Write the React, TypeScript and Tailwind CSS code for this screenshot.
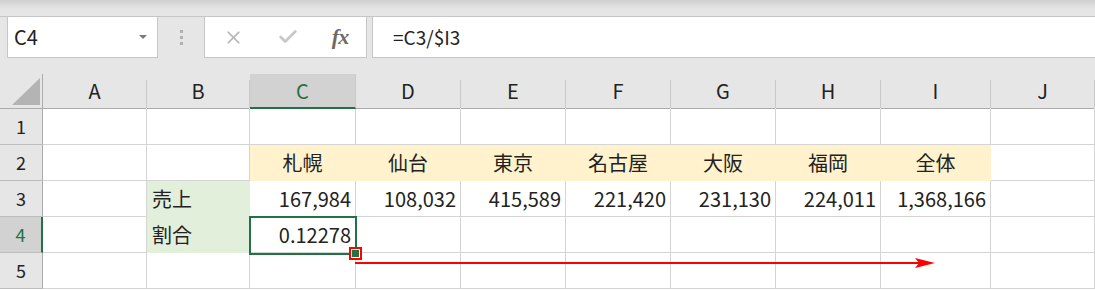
import { X, Check } from 'lucide-react'

const cols = [
  { key: 'A', w: 'w-[104px]' },
  { key: 'B', w: 'w-[103px]' },
  { key: 'C', w: 'w-[106px]' },
  { key: 'D', w: 'w-[105px]' },
  { key: 'E', w: 'w-[105px]' },
  { key: 'F', w: 'w-[105px]' },
  { key: 'G', w: 'w-[105px]' },
  { key: 'H', w: 'w-[105px]' },
  { key: 'I', w: 'w-[110px]' },
  { key: 'J', w: 'flex-1' },
]

type Cell = { text?: string; align?: 'left' | 'right' | 'center'; fill?: string }

// sheet data, indexed by row then column letter
const data: Record<number, Record<string, Cell>> = {
  2: {
    C: { text: '札幌', align: 'center', fill: 'bg-[#fff2cc]' },
    D: { text: '仙台', align: 'center', fill: 'bg-[#fff2cc]' },
    E: { text: '東京', align: 'center', fill: 'bg-[#fff2cc]' },
    F: { text: '名古屋', align: 'center', fill: 'bg-[#fff2cc]' },
    G: { text: '大阪', align: 'center', fill: 'bg-[#fff2cc]' },
    H: { text: '福岡', align: 'center', fill: 'bg-[#fff2cc]' },
    I: { text: '全体', align: 'center', fill: 'bg-[#fff2cc]' },
  },
  3: {
    B: { text: '売上', align: 'left', fill: 'bg-[#e2efda]' },
    C: { text: '167,984', align: 'right' },
    D: { text: '108,032', align: 'right' },
    E: { text: '415,589', align: 'right' },
    F: { text: '221,420', align: 'right' },
    G: { text: '231,130', align: 'right' },
    H: { text: '224,011', align: 'right' },
    I: { text: '1,368,166', align: 'right' },
  },
  4: {
    B: { text: '割合', align: 'left', fill: 'bg-[#e2efda]' },
    C: { text: '0.12278', align: 'right' },
  },
}

function FormulaBar() {
  return (
    <div className="bg-[#e6e6e6]">
      <div className="h-[17px] bg-gradient-to-b from-[#cfcfcf] via-[#e4e4e4] to-[#e6e6e6] border-b border-[#c6c6c6]" />
      <div className="flex h-[41px] items-stretch">
        <div className="ml-[7px] w-[151px] bg-white border border-[#c6c6c6] border-t-0 flex items-center justify-between pl-[6px] pr-[10px]">
          <span className="text-[20px] text-[#222]">C4</span>
          <span className="w-0 h-0 border-l-[4px] border-r-[4px] border-t-[4px] border-l-transparent border-r-transparent border-t-[#7a7a7a]" />
        </div>
        <div className="w-[46px] flex flex-col items-center justify-center gap-[3px]">
          <span className="w-[3px] h-[3px] bg-[#b0b0b0]" />
          <span className="w-[3px] h-[3px] bg-[#b0b0b0]" />
          <span className="w-[3px] h-[3px] bg-[#b0b0b0]" />
        </div>
        <div className="w-[163px] bg-white border border-[#c6c6c6] border-t-0 flex items-center">
          <div className="w-[56px] flex justify-center pl-[1px]">
            <X size={21} strokeWidth={2} className="text-[#b5b5b5]" />
          </div>
          <div className="w-[54px] flex justify-center">
            <Check size={22} strokeWidth={3} className="text-[#c8c8c8]" />
          </div>
          <div className="w-[50px] flex justify-center">
            <span className="font-['Liberation_Serif',serif] italic font-bold text-[22px] leading-none text-[#6f6a63] tracking-[-1px]">fx</span>
          </div>
        </div>
        <div className="ml-[5px] flex-1 bg-white border-b border-l border-[#c6c6c6] flex items-center pl-[20px]">
          <span className="text-[19px] text-[#222]">=C3/$I3</span>
        </div>
      </div>
      <div className="h-[16px]" />
    </div>
  )
}

function ColumnHeader() {
  return (
    <div className="flex h-[35px] bg-[#e6e6e6]">
      <div className="w-[43px] border-r border-b border-[#ababab] relative">
        <svg width="28" height="27" className="absolute left-[12px] bottom-[3px]">
          <polygon points="28,0 28,27 0,27" fill="#b4b4b4" />
        </svg>
      </div>
      {cols.map((c) =>
        c.key === 'C' ? (
          <div key={c.key} className={`${c.w} bg-[#d2d2d2] border-r border-[#c8c8c8] border-b-2 border-b-[#217346] flex items-center justify-center text-[20px] text-[#217346]`}>
            {c.key}
          </div>
        ) : (
          <div key={c.key} className={`${c.w} flex items-end`}>
            <div className="flex-1 h-full border-b border-[#ababab] flex items-center justify-center text-[20px] text-[#222]">{c.key}</div>
            <div className="w-px h-[28px] bg-[#c8c8c8] mb-px" />
          </div>
        )
      )}
    </div>
  )
}

function Row({ n }: { n: number }) {
  const row = data[n] || {}
  const active = n === 4
  return (
    <div className="flex h-[36px]">
      <div
        className={
          active
            ? 'w-[43px] bg-[#d2d2d2] border-b border-[#bdbdbd] border-r-2 border-r-[#217346] flex items-center justify-center text-[18px] text-[#217346]'
            : 'w-[43px] bg-[#e6e6e6] border-b border-[#bdbdbd] border-r border-r-[#ababab] flex items-center justify-center text-[18px] text-[#222]'
        }
      >
        {n}
      </div>
      {cols.map((c) => {
        const cell = row[c.key] || {}
        const justify =
          cell.align === 'right' ? 'justify-end pr-[4px]' : cell.align === 'center' ? 'justify-center' : 'justify-start pl-[5px]'
        return (
          <div
            key={c.key}
            className={`${c.w} ${cell.fill ?? 'bg-white'} ${cell.fill ? 'border-transparent' : 'border-[#d4d4d4]'} border-r border-b flex items-center ${justify} text-[20px] text-[#222] whitespace-nowrap`}
          >
            {cell.text}
          </div>
        )
      })}
    </div>
  )
}

export default function App() {
  return (
    <div className="w-[1095px] h-[290px] overflow-hidden bg-white font-['Noto_Sans_CJK_JP','Noto_Sans',sans-serif] relative">
      <FormulaBar />
      <ColumnHeader />
      {[1, 2, 3, 4, 5].map((n) => (
        <Row key={n} n={n} />
      ))}

      {/* active cell C4 */}
      <div className="absolute left-[249px] top-[216px] w-[108px] h-[39px] border-2 border-[#217346]" />
      {/* fill handle, outlined in red */}
      <div className="absolute left-[349px] top-[247px] w-[13px] h-[13px] border-2 border-[#ff0000] bg-white p-px">
        <div className="w-full h-full bg-[#217346]" />
      </div>
      {/* drag arrow */}
      <svg className="absolute left-[355px] top-[256px]" width="582" height="14">
        <line x1="0" y1="7" x2="565" y2="7" stroke="#ff0000" strokeWidth="2" />
        <polygon points="560,2 580,7 560,12 564,7" fill="#ff0000" />
      </svg>
    </div>
  )
}
